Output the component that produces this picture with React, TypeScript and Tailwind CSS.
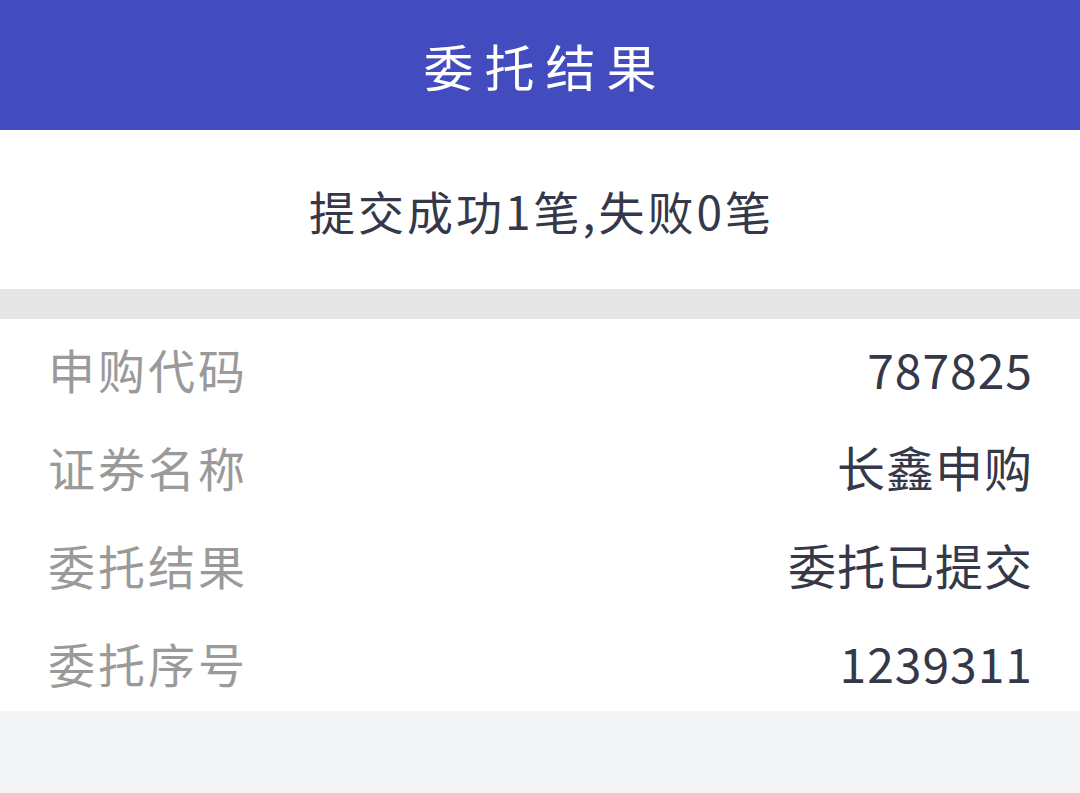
import React from "react";

const rows: { label: string; value: string }[] = [
  { label: "申购代码", value: "787825" },
  { label: "证券名称", value: "长鑫申购" },
  { label: "委托结果", value: "委托已提交" },
  { label: "委托序号", value: "1239311" },
];

export default function App() {
  return (
    <div
      className="w-[1080px] h-[793px] bg-[#f3f4f6] flex flex-col overflow-hidden"
      style={{ fontFamily: '"Noto Sans CJK SC", "Noto Sans", sans-serif' }}
    >
      <header className="h-[130px] bg-[#434cbf] flex items-center justify-center">
        <h1 className="text-[50px] leading-none text-white tracking-[11px] pl-[11px] font-normal">
          委托结果
        </h1>
      </header>

      <section className="h-[159px] bg-white flex items-center justify-center">
        <p className="text-[46px] leading-none text-[#353849] tracking-[3px] pl-[3px]">
          提交成功1笔,失败0笔
        </p>
      </section>

      <div className="h-[30px] bg-[#e5e5e5]" />

      <section className="bg-white flex flex-col">
        {rows.map((r) => (
          <div key={r.label} className="h-[98px] flex items-center justify-between pl-[48px] pr-[47px]">
            <span className="text-[47px] leading-none text-[#9a9a9a] tracking-[3px]">{r.label}</span>
            <span className="text-[48px] leading-none text-[#353849] tracking-[1px]">{r.value}</span>
          </div>
        ))}
      </section>
    </div>
  );
}
